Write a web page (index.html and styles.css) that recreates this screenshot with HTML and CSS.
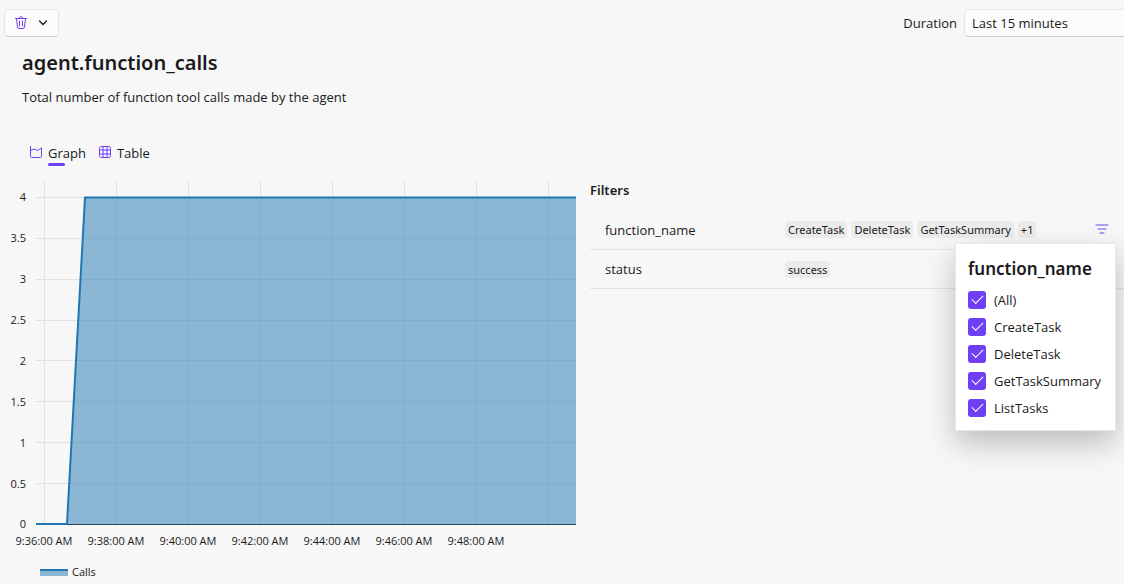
FILE: index.html
```html
<!DOCTYPE html>
<html lang="en">
<head>
<meta charset="utf-8">
<title>agent.function_calls</title>
<link rel="stylesheet" href="styles.css">
</head>
<body>
<div class="page">
  <header class="toolbar">
    <button class="clear-button" type="button" aria-label="Clear metrics">
      <svg class="icon-trash" width="16" height="16" viewBox="0 0 16 16" fill="none" stroke="currentColor" stroke-linecap="round"><path d="M2.5 3.500h11M6 3.500c0-2.500 4-2.500 4 0M3.500 3.500l1 8.500q.2 1.500 1.700 1.500h3.600q1.500 0 1.700-1.500l1-8.500M6.500 6v5M9.500 6v5"/></svg>
      <svg width="10" height="6" viewBox="0 0 10 6" fill="none" stroke="#1a1a1a" stroke-width="1.300" stroke-linecap="round"><path d="M1.500 1l3.500 3.500 3.500-3.500"/></svg>
    </button>
    <label class="duration-label" for="duration">Duration</label>
    <select class="duration" id="duration"><option>Last 15 minutes</option></select>
  </header>

  <section class="intro">
    <h1 class="title">agent.function_calls</h1>
    <p class="description">Total number of function tool calls made by the agent</p>
  </section>

  <nav class="tabs" role="tablist">
    <button class="tab tab-active" type="button" role="tab" aria-selected="true">
      <svg class="tab-icon" width="14" height="14" viewBox="0 0 14 14" fill="none" stroke="currentColor"><path d="M1.500 1v10.500q0 1 1 1h9q1 0 1-1V3L8.500 5.500 5 4 1.500 5.500"/></svg>
      <span class="tab-text">Graph</span>
    </button>
    <button class="tab" type="button" role="tab" aria-selected="false">
      <svg class="tab-icon" width="14" height="14" viewBox="0 0 14 14" fill="none" stroke="currentColor"><rect x="1.500" y="1.500" width="11" height="11" rx="2"/><path d="M5 1.500v11M9 1.500v11M1.500 5h11M1.500 9h11"/></svg>
      <span class="tab-text">Table</span>
    </button>
  </nav>

  <main class="content">
    <svg class="chart" viewBox="0 175 576 409" role="img" aria-label="Calls over time">
      <g class="grid-lines">
        <path d="M44.500 180V524M116.500 180V524M188.500 180V524M260.500 180V524M332.500 180V524M404.500 180V524M476.500 180V524M548.500 180V524"/>
        <path d="M36 197.500H576M36 238.500H576M36 279.500H576M36 320.500H576M36 360.500H576M36 401.500H576M36 442.500H576M36 483.500H576"/>
      </g>
      <path class="area" d="M67 524L85 197H576V524Z"/>
      <path class="series" d="M36 524H67L85 197.500H576"/>
      <path class="axis" d="M67 524.500H576"/>
      <g class="tick-y">
        <text x="26" y="201">4</text>
        <text x="26" y="242">3.5</text>
        <text x="26" y="283">3</text>
        <text x="26" y="324">2.5</text>
        <text x="26" y="365">2</text>
        <text x="26" y="406">1.5</text>
        <text x="26" y="447">1</text>
        <text x="26" y="488">0.5</text>
        <text x="26" y="528">0</text>
      </g>
      <g class="tick-x">
        <text x="44" y="545">9:36:00 AM</text>
        <text x="116" y="545">9:38:00 AM</text>
        <text x="188" y="545">9:40:00 AM</text>
        <text x="260" y="545">9:42:00 AM</text>
        <text x="332" y="545">9:44:00 AM</text>
        <text x="404" y="545">9:46:00 AM</text>
        <text x="476" y="545">9:48:00 AM</text>
      </g>
      <path class="area" d="M40 570H68V576H40Z"/>
      <path class="series" d="M40 570H68"/>
      <text x="72" y="576">Calls</text>
    </svg>

    <section class="filters">
      <h2 class="filters-title">Filters</h2>
      <div class="filter-row">
        <span class="filter-name">function_name</span>
        <span class="tags"><span class="tag">CreateTask</span><span class="tag">DeleteTask</span><span class="tag">GetTaskSummary</span><span class="tag">+1</span></span>
        <button class="filter-button" type="button" aria-label="Filter function_name">
          <svg width="14" height="12" viewBox="0 0 14 12" fill="none" stroke="currentColor" stroke-linecap="round"><path d="M1 2h12M3 6h8M5 10h4"/></svg>
        </button>
        <div class="popup">
          <h3 class="popup-title">function_name</h3>
          <label class="option"><input class="check" type="checkbox" checked>(All)</label>
          <label class="option"><input class="check" type="checkbox" checked>CreateTask</label>
          <label class="option"><input class="check" type="checkbox" checked>DeleteTask</label>
          <label class="option"><input class="check" type="checkbox" checked>GetTaskSummary</label>
          <label class="option"><input class="check" type="checkbox" checked>ListTasks</label>
        </div>
      </div>
      <div class="filter-row">
        <span class="filter-name">status</span>
        <span class="tags"><span class="tag">success</span></span>
      </div>
    </section>
  </main>
</div>
</body>
</html>
```
FILE: styles.css
```css
* { box-sizing: border-box; }
body {
  margin: 0;
  background: #f7f7f7;
  color: #1a1a1a;
  font: 13px/20px "Open Sans", "Noto Sans", sans-serif;
  overflow: hidden;
}
h1, h2, h3, p { margin: 0; }
button, select { font: inherit; color: inherit; }
button { border: 0; padding: 0; background: none; }

.toolbar {
  display: flex;
  align-items: center;
  padding: 9px 0 0 4px;
  margin-right: -24px;
}
.clear-button {
  display: flex;
  align-items: center;
  gap: 9px;
  height: 28px;
  padding: 0 10px 0 8px;
  border: 1px solid #e5e5e5;
  border-bottom-color: #d0d0d0;
  border-radius: 4px;
  background: #fcfcfc;
}
.icon-trash { color: #6f3ff5; }
.duration-label { margin-left: auto; margin-right: 7px; }
.duration {
  appearance: none;
  width: 184px;
  height: 28px;
  padding: 0 7px;
  border: 1px solid #e5e5e5;
  border-bottom-color: #d0d0d0;
  border-radius: 4px;
  background: #fcfcfc;
}

.title, .popup-title, .filters-title, .tag { font-family: "Noto Sans", "Open Sans", sans-serif; }

.intro { padding: 12px 22px 0; }
.title { font-size: 20px; line-height: 28px; font-weight: 600; }
.description { margin-top: 10px; }

.tabs { display: flex; gap: 12px; padding: 35px 29px 0; }
.tab { display: flex; align-items: center; gap: 5px; height: 22px; }
.tab-icon { color: #6f3ff5; margin-bottom: 2px; }
.tab-text { position: relative; }
.tab-active .tab-text::after {
  content: "";
  position: absolute;
  left: 0;
  bottom: -3px;
  width: 17px;
  height: 3px;
  border-radius: 2px;
  background: #6f3ff5;
}

.content {
  display: grid;
  grid-template-columns: 576fr 534fr;
  gap: 14px;
  align-items: start;
  padding-top: 11px;
}
.chart { display: block; width: 100%; font-size: 11px; fill: #1a1a1a; }
.grid-lines { fill: none; stroke: #e2e2e2; }
.area { fill: #1f77b4; fill-opacity: 0.5; }
.series { fill: none; stroke: #1f77b4; stroke-width: 2; }
.axis { fill: none; stroke: #2b4558; }
.tick-y { text-anchor: end; }
.tick-x { text-anchor: middle; }

.filters { padding-top: 5px; }
.filters-title { font-size: 13px; line-height: 20px; font-weight: 600; }
.filter-row {
  position: relative;
  display: grid;
  grid-template-columns: 180px 1fr 28px;
  align-items: center;
  height: 39px;
  padding: 0 8px 0 15px;
  border-bottom: 1px solid #e3e3e3;
}
.filters-title + .filter-row { height: 40px; margin-top: 10px; }
.tags { display: flex; gap: 4px; }
.tag {
  padding: 0 3px;
  border-radius: 4px;
  background: #ebebeb;
  font-size: 11px;
  line-height: 17px;
}
.filter-button { display: grid; place-items: center; height: 30px; padding-bottom: 2px; color: #6f3ff5; }

.popup {
  position: absolute;
  z-index: 1;
  top: 33px;
  right: 8px;
  width: 161px;
  padding: 13px 12px 9px;
  border: 1px solid #e8e8e8;
  background: #fff;
  box-shadow: 0 12px 28px rgba(0, 0, 0, 0.24);
}
.popup-title { margin-bottom: 5px; font-size: 17px; line-height: 24px; font-weight: 600; }
.option { display: flex; align-items: center; gap: 8px; height: 27px; }
.check {
  appearance: none;
  width: 18px;
  height: 18px;
  margin: 0;
  border-radius: 3px;
  background: #6f3ff5;
  display: grid;
  place-items: center;
}
.check:checked::before {
  content: "";
  width: 10px;
  height: 5px;
  margin-bottom: 3px;
  border: solid #fff;
  border-width: 0 0 1px 1px;
  transform: rotate(-45deg);
}
```
